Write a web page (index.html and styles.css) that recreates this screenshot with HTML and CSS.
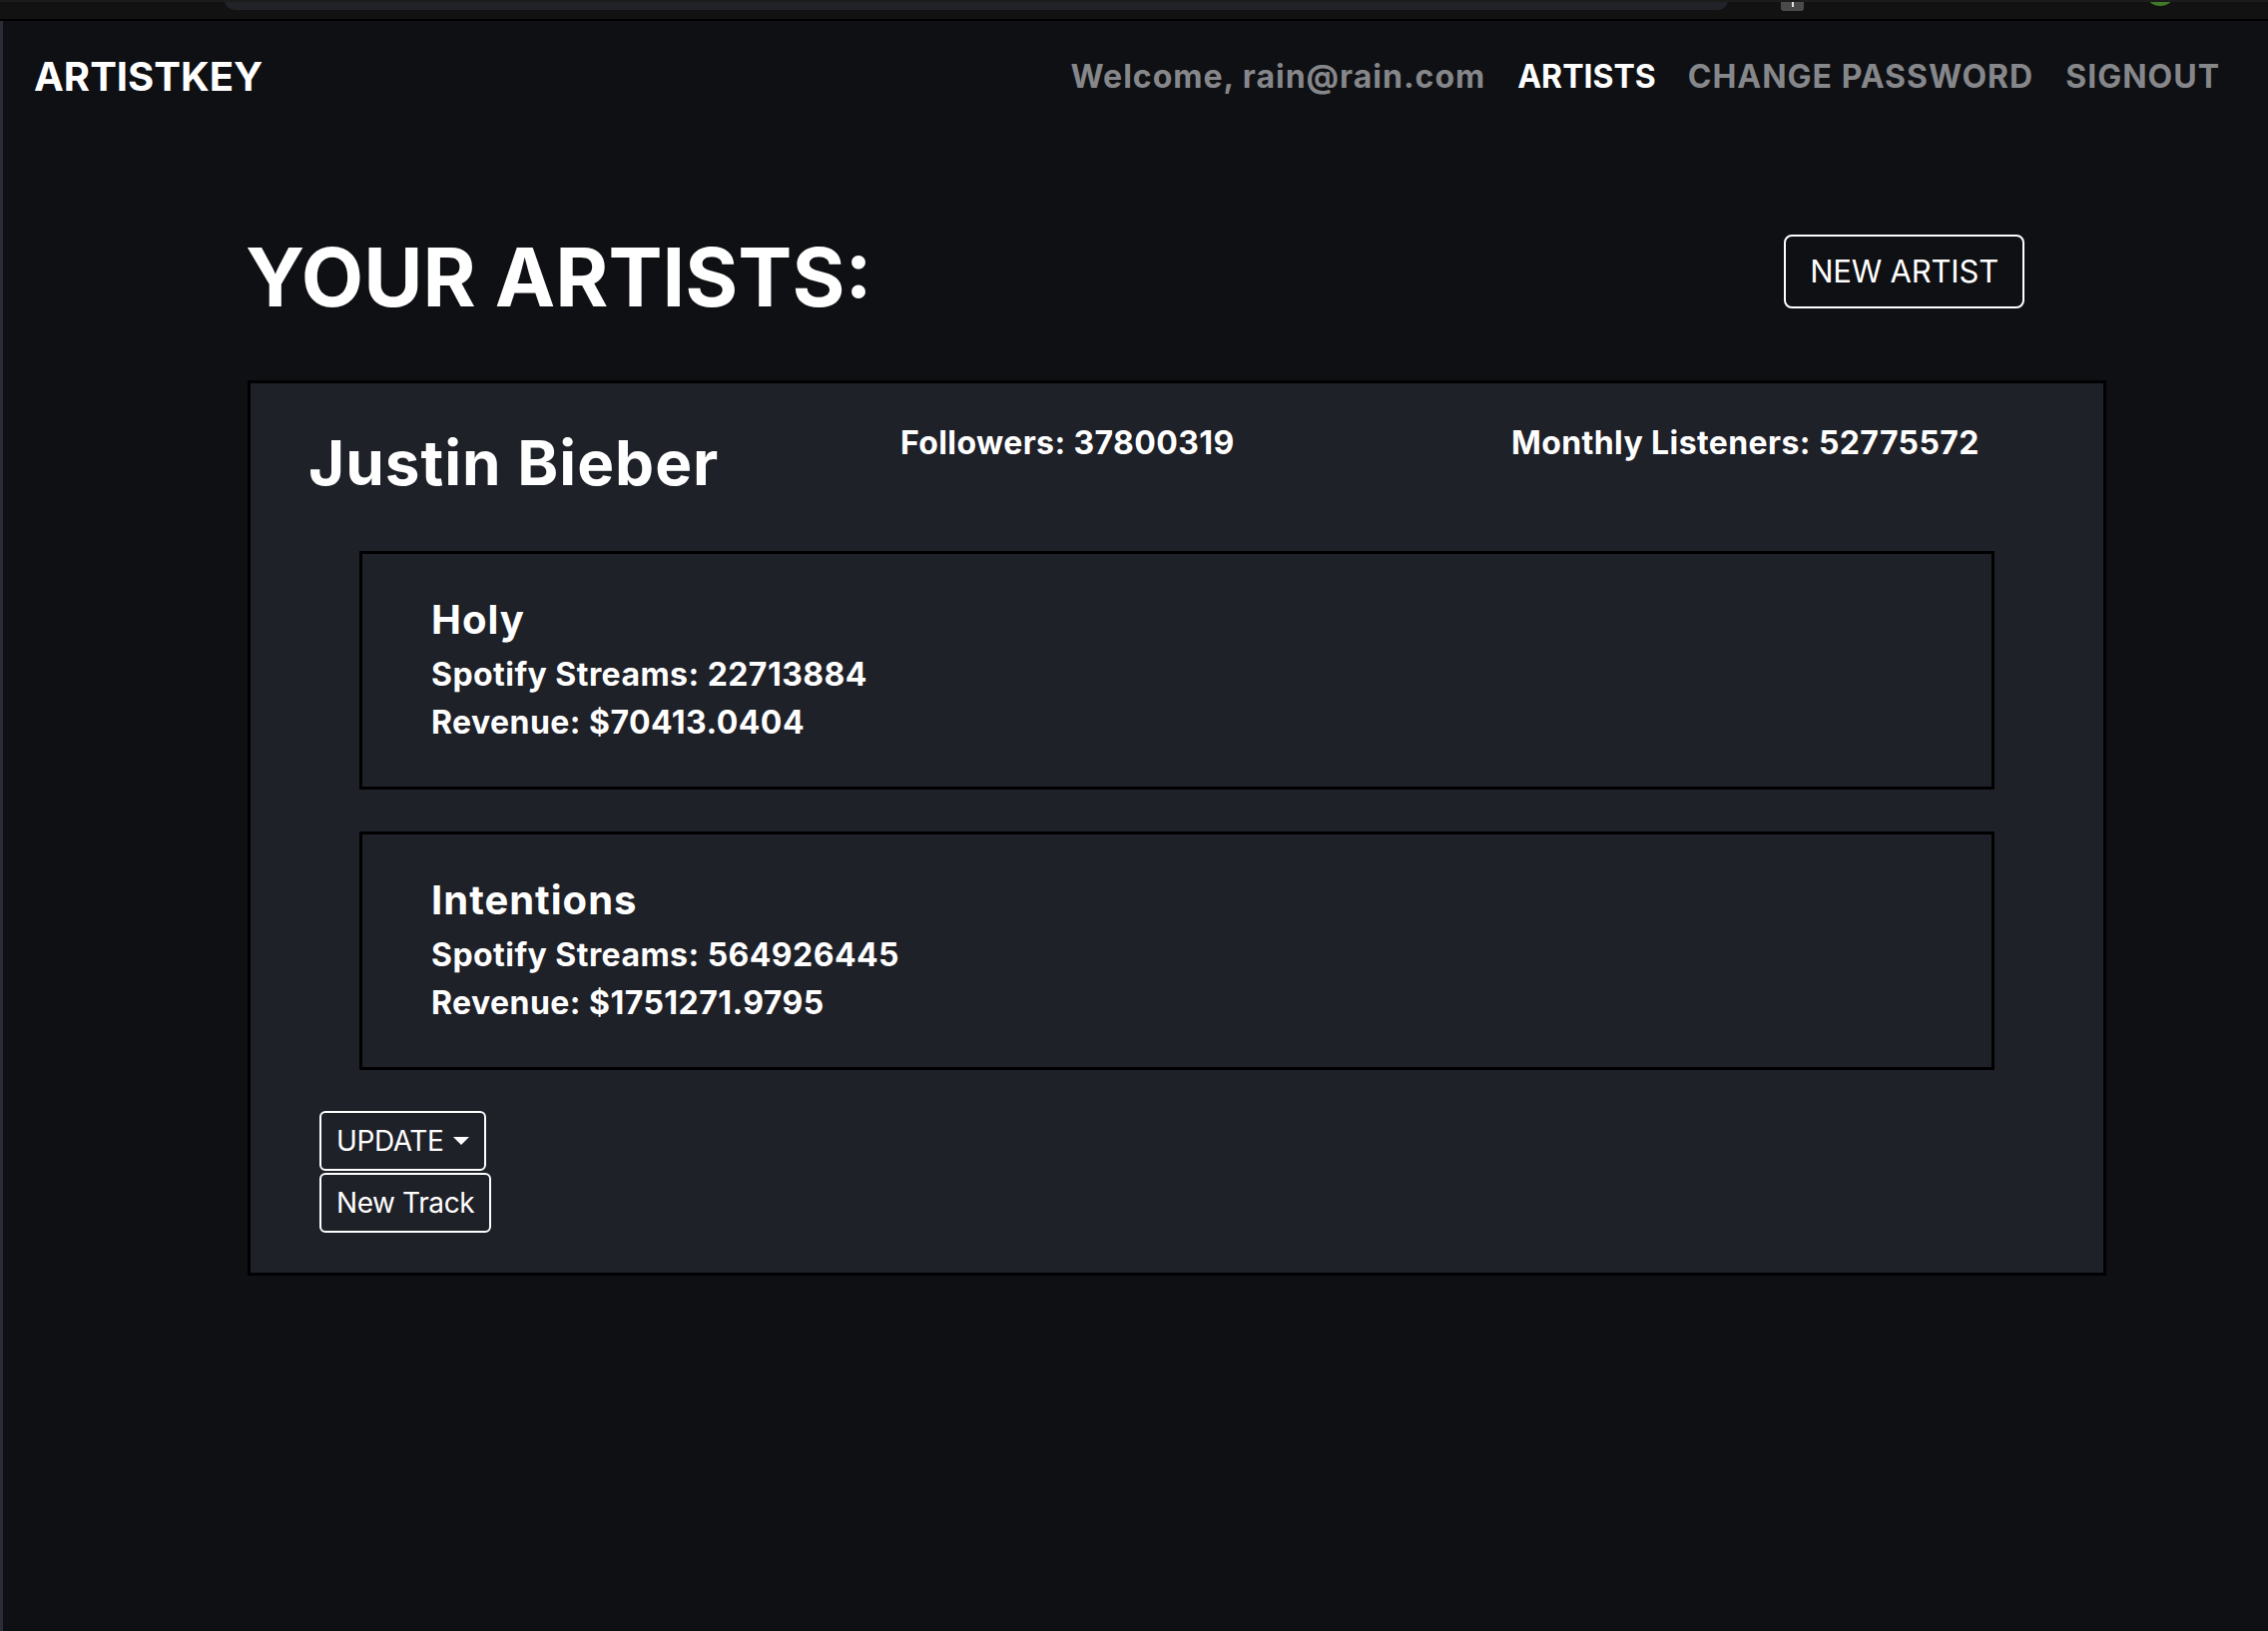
FILE: index.html
```html
<!DOCTYPE html>
<html lang="en">
<head>
<meta charset="utf-8">
<title>ArtistKey</title>
<link rel="stylesheet" href="styles.css">
</head>
<body>
<div class="chrome">
  <div class="address-bar"></div>
  <div class="tab-handle"><span></span></div>
  <div class="status-dot"></div>
</div>
<div class="app">
  <nav class="navbar">
    <a class="brand" href="#">ARTISTKEY</a>
    <ul class="nav-links">
      <li class="nav-item welcome">Welcome, rain@rain.com</li>
      <li class="nav-item active">ARTISTS</li>
      <li class="nav-item">CHANGE PASSWORD</li>
      <li class="nav-item">SIGNOUT</li>
    </ul>
  </nav>
  <main class="main">
    <div class="header-row">
      <h1 class="page-title">YOUR ARTISTS:</h1>
      <button class="btn btn-lg">NEW ARTIST</button>
    </div>
    <section class="artist-card">
      <div class="artist-row">
        <h2 class="artist-name">Justin Bieber</h2>
        <div class="stat">Followers: 37800319</div>
        <div class="stat">Monthly Listeners: 52775572</div>
      </div>
      <div class="tracks">
        <div class="track-card">
          <h3 class="track-title">Holy</h3>
          <div class="track-line">Spotify Streams: 22713884</div>
          <div class="track-line">Revenue: $70413.0404</div>
        </div>
        <div class="track-card">
          <h3 class="track-title">Intentions</h3>
          <div class="track-line">Spotify Streams: 564926445</div>
          <div class="track-line">Revenue: $1751271.9795</div>
        </div>
      </div>
      <div class="actions">
        <button class="btn btn-sm dropdown-toggle">UPDATE</button>
        <button class="btn btn-sm">New Track</button>
      </div>
    </section>
  </main>
</div>
</body>
</html>
```

FILE: styles.css
```css
* { box-sizing: border-box; }

html, body {
  margin: 0;
  padding: 0;
  background: #0f1014;
  color: #ffffff;
  font-family: Inter, "Liberation Sans", sans-serif;
}

body {
  min-height: 1634px;
  display: flex;
  flex-direction: column;
}

/* browser chrome strip */
.chrome {
  height: 21px;
  background: #121212;
  border-top: 2px solid #1c1c1c;
  border-bottom: 2px solid #000;
  display: flex;
  align-items: flex-start;
  overflow: hidden;
}
.address-bar {
  margin-left: 225px;
  width: 1506px;
  height: 10px;
  margin-top: -2px;
  background: #222329;
  border-radius: 0 0 14px 14px;
}
.tab-handle {
  margin-left: 53px;
  margin-top: -2px;
  width: 23px;
  height: 11px;
  background: #4a4a4c;
  border-radius: 0 0 3px 3px;
  display: flex;
  justify-content: center;
}
.tab-handle span {
  width: 2px;
  height: 7px;
  background: #e0e0e0;
}
.status-dot {
  margin-left: 341px;
  margin-top: -28px;
  width: 32px;
  height: 32px;
  border-radius: 50%;
  background: #3f7a26;
}

.app {
  flex: 1;
  border-left: 3px solid #2a2d35;
  display: flex;
  flex-direction: column;
}

/* navbar */
.navbar {
  display: flex;
  align-items: center;
  justify-content: space-between;
  padding: 26px 32px 22px 31px;
}
.brand {
  font-size: 40px;
  line-height: 60px;
  font-weight: 700;
  color: #ffffff;
  text-decoration: none;
}
.nav-links {
  list-style: none;
  margin: 0;
  padding: 0;
  display: flex;
}
.nav-item {
  font-size: 32px;
  line-height: 48px;
  font-weight: 700;
  letter-spacing: 1px;
  padding: 0 16px;
  color: #86878a;
}
.nav-item.active { color: #ffffff; letter-spacing: 0; }

/* main */
.main {
  padding-left: 245px;
  width: 2107px;
}
.header-row {
  display: flex;
  justify-content: space-between;
  align-items: flex-start;
  padding-right: 82px;
  margin-top: 100px;
}
.page-title {
  margin: 0 0 0 -2px;
  font-size: 81px;
  line-height: 98px;
  font-weight: 700;
}

.btn {
  font-family: Inter, "Liberation Sans", sans-serif;
  background: transparent;
  color: #ffffff;
  border: 2px solid #ffffff;
  cursor: pointer;
}
.btn-lg {
  margin-top: 6px;
  font-size: 31px;
  line-height: 48px;
  letter-spacing: -0.2px;
  padding: 11px 24px;
  border-radius: 8px;
}
.btn-sm {
  font-size: 28px;
  line-height: 42px;
  letter-spacing: -0.4px;
  padding: 7px 15px;
  border-radius: 6px;
}
.dropdown-toggle::after {
  content: "";
  display: inline-block;
  margin-left: 10px;
  vertical-align: 6px;
  border-top: 8px solid #ffffff;
  border-left: 8px solid transparent;
  border-right: 8px solid transparent;
}

/* artist card */
.artist-card {
  margin-top: 54px;
  background: #1f2129;
  border: 3px solid #000000;
  padding: 36px 0 40px 0;
}
.artist-row {
  display: grid;
  grid-template-columns: 593px 612px 1fr;
  padding-left: 58px;
  align-items: start;
}
.artist-name {
  margin: 7px 0 0 0;
  font-size: 62px;
  line-height: 73px;
  letter-spacing: 1px;
  font-weight: 700;
}
.stat {
  font-size: 32px;
  line-height: 48px;
  letter-spacing: 0.4px;
  font-weight: 700;
}

.tracks {
  margin: 52px 109px 0 109px;
  display: flex;
  flex-direction: column;
  gap: 42px;
}
.track-card {
  border: 3px solid #000000;
  padding: 42px 69px 40px 69px;
}
.track-title {
  margin: 0 0 7px 0;
  font-size: 40px;
  line-height: 48px;
  letter-spacing: 1px;
  font-weight: 700;
}
.track-line {
  font-size: 32px;
  line-height: 48px;
  letter-spacing: 0.45px;
  font-weight: 700;
}

.actions {
  margin-top: 41px;
  padding-left: 69px;
  display: flex;
  flex-direction: column;
  align-items: flex-start;
  gap: 2px;
}
```
